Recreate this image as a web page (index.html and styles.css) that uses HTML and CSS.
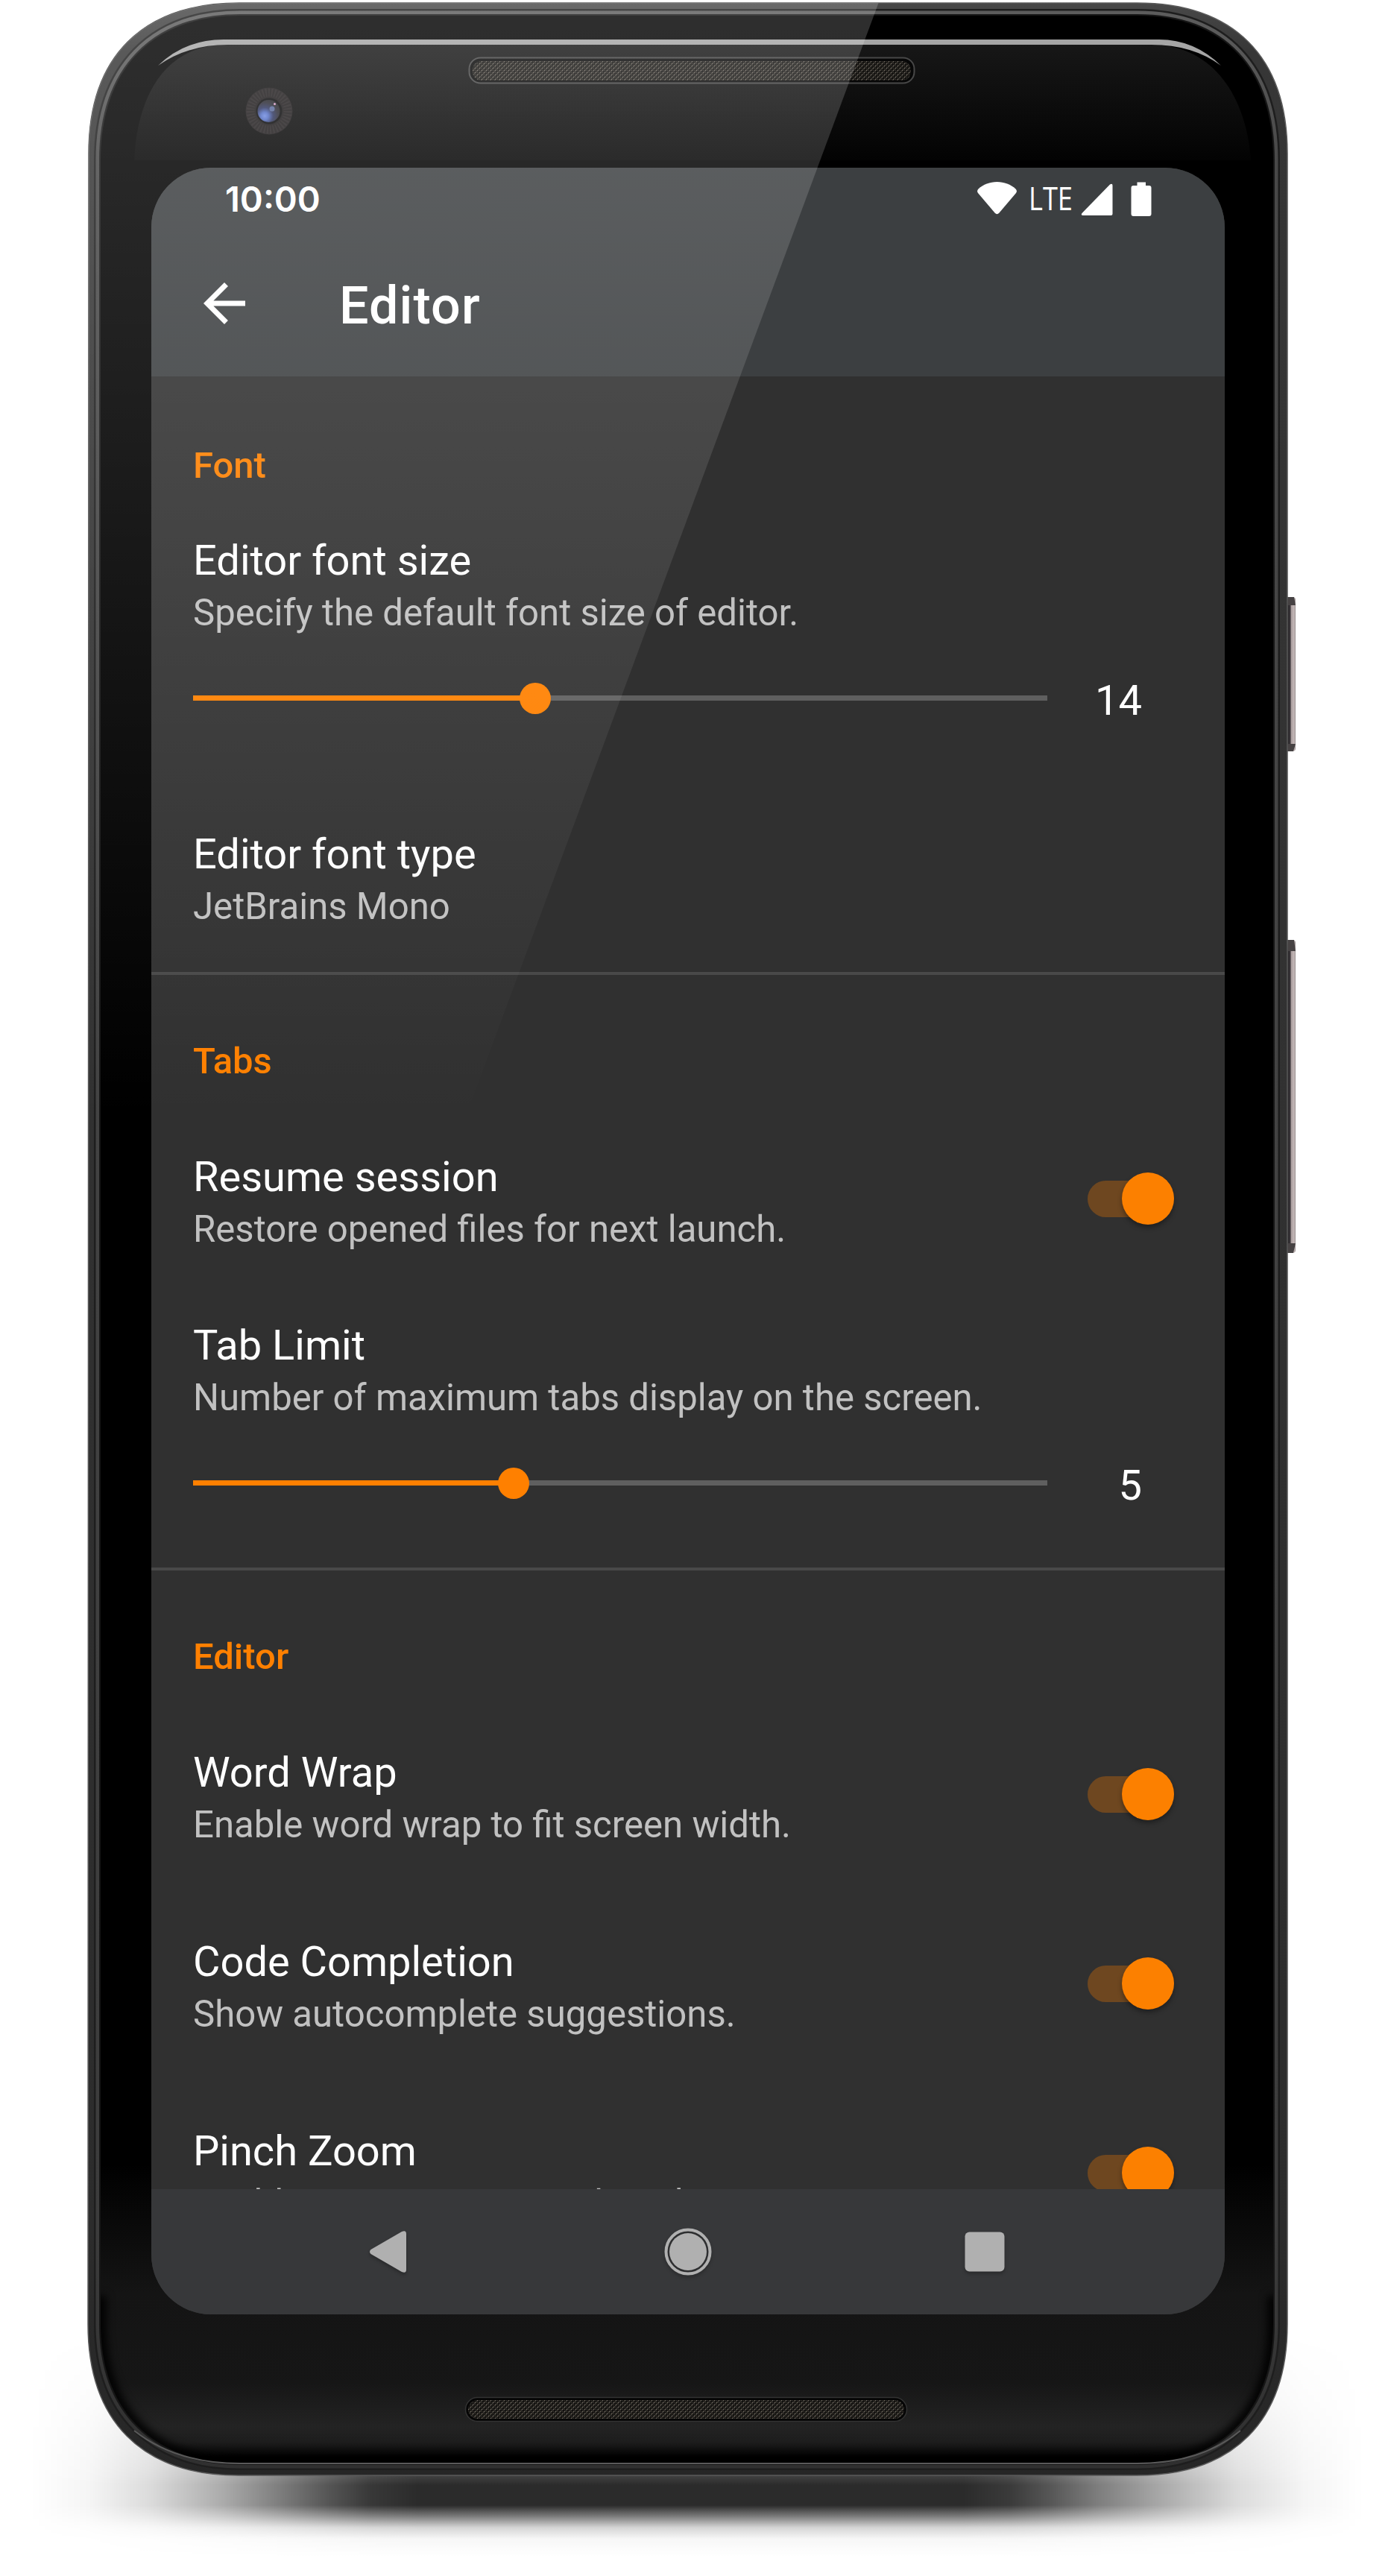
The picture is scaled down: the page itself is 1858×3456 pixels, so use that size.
FILE: index.html
```html
<!DOCTYPE html>
<html lang="en">
<head>
<meta charset="utf-8">
<title>Editor settings</title>
<link rel="stylesheet" href="styles.css">
</head>
<body>
<main class="device">
  <svg class="device-art" viewBox="0 0 1858 3456" aria-hidden="true">
    <defs>
      <path id="outline" d="M119 206C119 76 191 4 321 4H1525C1655 4 1727 76 1727 206V3118C1727 3248 1655 3321 1525 3321H320C190 3321 118 3248 118 3118Z"/>
      <path id="glass" d="M135 215C135 92 205 21 322 21H1525C1642 21 1708 92 1708 215V3118C1708 3235 1640 3305 1525 3305H322C206 3305 135 3235 135 3118Z"/>
      <clipPath id="glass-clip"><use href="#glass"/></clipPath>
      <linearGradient id="frame-fill" x1="0" y1="0" x2="0" y2="1">
        <stop offset="0" stop-color="#484848"/><stop offset=".02" stop-color="#363636"/><stop offset=".9" stop-color="#2c2c2c"/><stop offset="1" stop-color="#262626"/>
      </linearGradient>
      <linearGradient id="rim-fill" x1="0" y1="0" x2="0" y2="1">
        <stop offset="0" stop-color="#5c5c5c"/><stop offset=".06" stop-color="#484848"/><stop offset=".9" stop-color="#3c3c3c"/><stop offset="1" stop-color="#303030"/>
      </linearGradient>
      <linearGradient id="glass-fill" x1="0" y1="0" x2="0" y2="3456" gradientUnits="userSpaceOnUse">
        <stop offset="0" stop-color="#000"/><stop offset=".84" stop-color="#000"/><stop offset=".89" stop-color="#141414"/><stop offset=".925" stop-color="#161616"/><stop offset=".942" stop-color="#232323"/><stop offset=".948" stop-color="#1d1d1d"/><stop offset=".954" stop-color="#000"/>
      </linearGradient>
      <linearGradient id="top-fill" x1="0" y1="60" x2="0" y2="215" gradientUnits="userSpaceOnUse">
        <stop offset="0" stop-color="#171717"/><stop offset=".5" stop-color="#0d0d0d"/><stop offset="1" stop-color="#030303"/>
      </linearGradient>
      <linearGradient id="shadow-x" x1="40" y1="0" x2="1830" y2="0" gradientUnits="userSpaceOnUse">
        <stop offset="0" stop-color="#000" stop-opacity="0"/><stop offset=".045" stop-color="#000" stop-opacity=".04"/><stop offset=".09" stop-color="#000" stop-opacity=".14"/><stop offset=".145" stop-color="#000" stop-opacity=".33"/><stop offset=".19" stop-color="#000" stop-opacity=".52"/><stop offset=".225" stop-color="#000" stop-opacity=".67"/><stop offset=".255" stop-color="#000" stop-opacity=".78"/><stop offset=".29" stop-color="#000" stop-opacity=".83"/>
        <stop offset=".7" stop-color="#000" stop-opacity=".83"/><stop offset=".735" stop-color="#000" stop-opacity=".77"/><stop offset=".765" stop-color="#000" stop-opacity=".66"/><stop offset=".8" stop-color="#000" stop-opacity=".51"/><stop offset=".85" stop-color="#000" stop-opacity=".33"/><stop offset=".905" stop-color="#000" stop-opacity=".14"/><stop offset=".955" stop-color="#000" stop-opacity=".04"/><stop offset="1" stop-color="#000" stop-opacity="0"/>
      </linearGradient>
      <linearGradient id="shadow-y" x1="0" y1="3130" x2="0" y2="3430" gradientUnits="userSpaceOnUse">
        <stop offset="0" stop-color="#fff" stop-opacity="0"/><stop offset=".3" stop-color="#fff" stop-opacity=".3"/><stop offset=".6" stop-color="#fff" stop-opacity=".8"/><stop offset=".68" stop-color="#fff"/><stop offset=".77" stop-color="#fff"/><stop offset=".82" stop-color="#fff" stop-opacity=".62"/><stop offset=".87" stop-color="#fff" stop-opacity=".2"/><stop offset=".92" stop-color="#fff" stop-opacity=".04"/><stop offset="1" stop-color="#fff" stop-opacity="0"/>
      </linearGradient>
      <mask id="shadow-mask" maskUnits="userSpaceOnUse" x="0" y="3130" width="1858" height="300"><rect x="0" y="3130" width="1858" height="300" fill="url(#shadow-y)"/></mask>
      <linearGradient id="button-fill" x1="1726" y1="0" x2="1738" y2="0" gradientUnits="userSpaceOnUse">
        <stop offset="0" stop-color="#222"/><stop offset=".42" stop-color="#3a353a"/><stop offset=".5" stop-color="#a89c9c"/><stop offset=".85" stop-color="#c6baba"/><stop offset="1" stop-color="#8c8484"/>
      </linearGradient>
      <pattern id="mesh" width="6" height="6" patternUnits="userSpaceOnUse">
        <rect width="6" height="6" fill="#11100e"/>
        <path d="M.5 2.500L2.500 .5M3.500 5.500L5.500 3.500" stroke="#6b655c" stroke-width="1.200"/>
        <path d="M3.500 .5L5 2M.5 3.500L2 5" stroke="#37332e" stroke-width="1.100"/>
      </pattern>
      <radialGradient id="lens" cx=".32" cy=".72" r=".75">
        <stop offset="0" stop-color="#6f8be0"/><stop offset=".22" stop-color="#5570c4"/><stop offset=".5" stop-color="#303862"/><stop offset=".8" stop-color="#2c2c36"/><stop offset="1" stop-color="#26262a"/>
      </radialGradient>
      <filter id="soft" color-interpolation-filters="sRGB"><feGaussianBlur stdDeviation="6"/></filter>
    </defs>

    <!-- drop shadow under the phone -->
    <rect x="40" y="3130" width="1790" height="300" fill="url(#shadow-x)" mask="url(#shadow-mask)"/>

    <!-- side keys -->
    <rect x="1722" y="801" width="16" height="207" rx="4" fill="url(#button-fill)"/>
    <path d="M1727 801H1736L1738 812H1728Z M1727 1008H1735L1738 998H1728Z" fill="#464243"/>
    <rect x="1722" y="1261" width="16" height="420" rx="4" fill="url(#button-fill)"/>
    <path d="M1727 1261H1736L1738 1276H1728Z M1727 1681H1735L1738 1668H1728Z" fill="#464243"/>

    <!-- metal frame -->
    <use href="#outline" fill="url(#frame-fill)"/>
    <use href="#outline" fill="none" stroke="#5a5a5a" stroke-width="1.500"/>
    <use href="#glass" fill="none" stroke="#1e1e1e" stroke-width="18"/>
    <use href="#glass" fill="none" stroke="url(#rim-fill)" stroke-width="13"/>
    <use href="#glass" fill="none" stroke="#161616" stroke-width="4"/>

    <!-- front glass -->
    <use href="#glass" fill="url(#glass-fill)"/>
    <g clip-path="url(#glass-clip)">
      <path d="M180 215C184 130 220 62 300 60H1548C1628 62 1672 130 1678 215Z" fill="url(#top-fill)"/>
      <path d="M135 3080V3118C135 3235 206 3305 322 3305H1525C1640 3305 1708 3235 1708 3118V3080" fill="none" stroke="#000" stroke-width="14" filter="url(#soft)"/>
    </g>
    <path d="M180 3261Q236 3305 322 3305H1525Q1612 3305 1664 3261" fill="none" stroke="#5a5a5a" stroke-width="2"/>
    <path d="M212 88Q248 53 300 53H1555Q1602 53 1638 88Q1600 60 1545 60H305Q252 60 212 88Z" fill="#a5a5a5"/>

    <!-- earpiece and bottom speaker -->
    <rect x="629.500" y="77.500" width="597" height="34" rx="15" fill="#070707" stroke="#484848" stroke-width="2"/>
    <rect x="634" y="82" width="588" height="26" rx="12" fill="url(#mesh)"/>
    <rect x="624.500" y="3216.500" width="592" height="32" rx="16" fill="#050505" stroke="#333" stroke-width="1.500"/>
    <rect x="628" y="3220" width="585" height="25" rx="12.500" fill="url(#mesh)"/>

    <!-- front camera -->
    <circle cx="361" cy="149" r="31.500" fill="#1e1b1c"/>
    <circle cx="361" cy="149" r="25" fill="none" stroke="#282425" stroke-width="11" stroke-dasharray="2 2"/>
    <circle cx="361" cy="149" r="17.500" fill="#0a0a0b"/>
    <circle cx="360.500" cy="149" r="15" fill="url(#lens)"/>
    <circle cx="365" cy="146" r="3.500" fill="#5a6a9a"/>
    <circle cx="368.500" cy="139.500" r="1.500" fill="#d9a0c8"/>
  </svg>

  <section class="screen">
    <header class="top">
      <div class="status-bar">
        <span class="clock">10:00</span>
        <svg class="status-icons" viewBox="0 0 240 50" aria-label="Wi-Fi, LTE, signal, battery">
          <g fill="#fff">
            <path d="M27.500 4C37 4 46 7.500 52.500 13.500Q55 16 53 19L30.500 45.500Q27.500 49 24.500 45.500L2 19Q0 16 2.500 13.500C9 7.500 18 4 27.500 4Z"/>
            <text class="lte" x="70" y="42" textLength="59" lengthAdjust="spacingAndGlyphs">LTE</text>
            <path d="M143 49Q139.500 49 141.500 46L179 7.500Q182.500 5.500 182.500 9V47Q182.500 49 180.500 49Z"/>
            <path d="M215.500 4.500H227V9H231.500Q234.500 9 234.500 12V47Q234.500 50 231.500 50H210.500Q207.500 50 207.500 47V12Q207.500 9 210.500 9H215.500Z"/>
          </g>
        </svg>
      </div>
      <div class="app-bar">
        <svg class="back" viewBox="0 0 24 24" fill="#fff" aria-label="Back"><path d="M20 11H7.830l5.590-5.590L12 4l-8 8 8 8 1.410-1.410L7.830 13H20v-2z"/></svg>
        <h1 class="app-title">Editor</h1>
      </div>
    </header>

    <div class="settings">
      <section class="group">
        <h2 class="group-title">Font</h2>
        <div class="pref pref-first">
          <h3 class="pref-title">Editor font size</h3>
          <p class="pref-summary">Specify the default font size of editor.</p>
          <div class="slider-row">
            <div class="slider"><div class="slider-fill" style="width:40.030%"></div></div>
            <span class="slider-value">14</span>
          </div>
        </div>
        <div class="pref pref-last">
          <h3 class="pref-title">Editor font type</h3>
          <p class="pref-summary">JetBrains Mono</p>
        </div>
      </section>

      <section class="group">
        <h2 class="group-title">Tabs</h2>
        <div class="pref pref-toggle pref-tight">
          <div>
            <h3 class="pref-title">Resume session</h3>
            <p class="pref-summary">Restore opened files for next launch.</p>
          </div>
          <span class="switch"><span class="thumb"></span></span>
        </div>
        <div class="pref">
          <h3 class="pref-title">Tab Limit</h3>
          <p class="pref-summary">Number of maximum tabs display on the screen.</p>
          <div class="slider-row">
            <div class="slider"><div class="slider-fill" style="width:37.500%"></div></div>
            <span class="slider-value">5</span>
          </div>
        </div>
      </section>

      <section class="group">
        <h2 class="group-title">Editor</h2>
        <div class="pref pref-toggle">
          <div>
            <h3 class="pref-title">Word Wrap</h3>
            <p class="pref-summary">Enable word wrap to fit screen width.</p>
          </div>
          <span class="switch"><span class="thumb"></span></span>
        </div>
        <div class="pref pref-toggle">
          <div>
            <h3 class="pref-title">Code Completion</h3>
            <p class="pref-summary">Show autocomplete suggestions.</p>
          </div>
          <span class="switch"><span class="thumb"></span></span>
        </div>
        <div class="pref pref-toggle">
          <div>
            <h3 class="pref-title">Pinch Zoom</h3>
            <p class="pref-summary">Enable zoom gesture in the editor.</p>
          </div>
          <span class="switch"><span class="thumb"></span></span>
        </div>
      </section>
    </div>

    <nav class="nav-bar">
      <svg class="nav-icons" viewBox="0 0 1440 168" fill="#b0b0b0" aria-label="Back, home, recents">
        <path d="M294.500 81L336 57Q342 54.500 342 60V108Q342 113.500 336 111L294.500 87Q291.500 84 294.500 81Z"/>
        <circle cx="720" cy="84" r="25"/>
        <circle cx="720" cy="84" r="29.500" fill="none" stroke="#b0b0b0" stroke-width="4"/>
        <rect x="1091.500" y="57.500" width="53" height="53" rx="6"/>
      </svg>
    </nav>
  </section>

  <!-- diagonal reflection across the glass -->
  <svg class="device-glare" viewBox="0 0 1858 3456" aria-hidden="true">
    <defs>
      <linearGradient id="glare" x1="0" y1="0" x2="0" y2="1500" gradientUnits="userSpaceOnUse">
        <stop offset="0" stop-color="#fff" stop-opacity=".185"/><stop offset="1" stop-color="#fff" stop-opacity="0"/>
      </linearGradient>
      <clipPath id="body-clip"><use href="#outline"/></clipPath>
    </defs>
    <path d="M100 0H1180L624 1500H100Z" fill="url(#glare)" clip-path="url(#body-clip)"/>
  </svg>
</main>
</body>
</html>
```
FILE: styles.css
```css
* {
  box-sizing: border-box;
  margin: 0;
  padding: 0;
}

body {
  background: #fff;
  font-family: Roboto, "Liberation Sans", sans-serif;
  color: #fff;
}

.device {
  position: relative;
  width: 1858px;
  height: 3456px;
  padding: 225px 215px 351px 203px;
  overflow: hidden;
}

.device-art,
.device-glare {
  position: absolute;
  inset: 0;
  width: 1858px;
  height: 3456px;
}

.device-glare {
  pointer-events: none;
}

.screen {
  position: relative;
  display: flex;
  flex-direction: column;
  width: 1440px;
  height: 2880px;
  border-radius: 80px;
  overflow: hidden;
  background: #303030;
}

.top {
  flex: none;
  height: 280px;
  background: #3c3f41;
}

.status-bar {
  display: flex;
  justify-content: space-between;
  height: 84px;
  padding: 15px 93px 0 99px;
}

.clock {
  font: 600 47px/54px Inter, sans-serif;
}

.status-icons {
  width: 240px;
  height: 50px;
  overflow: visible;
}

.lte {
  font: 400 43px "Open Sans", sans-serif;
}

.app-bar {
  display: flex;
  align-items: center;
  gap: 112px;
  height: 196px;
  padding-left: 56px;
}

.back {
  width: 84px;
  height: 84px;
}

.app-title {
  font-size: 70px;
  line-height: 82px;
  font-weight: 500;
  letter-spacing: 1.1px;
  padding-top: 5px;
}

.settings {
  flex: 1;
  min-height: 0;
  overflow: hidden;
}

.group + .group {
  border-top: 4px solid #494949;
}

.group-title {
  padding: 91px 0 0 56px;
  font-size: 49px;
  line-height: 57px;
  font-weight: 500;
  color: #ff8000;
}

.group + .group .group-title {
  padding-top: 87px;
}

.pref {
  padding: 94px 68px 28px 56px;
}

.pref-first {
  padding: 66px 68px 0 56px;
}

.pref-last {
  padding: 91px 68px 59px 56px;
}

.pref-tight {
  padding-bottom: 0;
}

.pref-title {
  font-size: 56px;
  line-height: 66px;
  font-weight: 400;
}

.pref-summary {
  margin-top: 9px;
  font-size: 49.12px;
  line-height: 57px;
  color: #c1c1c1;
}

.pref-toggle {
  display: flex;
  justify-content: space-between;
  align-items: center;
}

.slider-row {
  display: flex;
  justify-content: space-between;
  align-items: center;
  height: 171px;
  padding-right: 43px;
}

.slider {
  width: 1146px;
  height: 7px;
  background: #5f5f5f;
}

.slider-fill {
  position: relative;
  height: 7px;
  background: #ff8000;
}

.slider-fill::after {
  content: "";
  position: absolute;
  right: -21px;
  top: -17px;
  width: 42px;
  height: 42px;
  border-radius: 50%;
  background: #ff8000;
}

.slider-value {
  padding-top: 6px;
  font-size: 56px;
  line-height: 66px;
}

.switch {
  display: flex;
  align-items: center;
  justify-content: flex-end;
  width: 116px;
  height: 49px;
  margin-bottom: 8px;
  border-radius: 25px;
  background: #6e4720;
}

.thumb {
  flex: none;
  width: 70px;
  height: 70px;
  border-radius: 50%;
  background: #fc8000;
  box-shadow: 0 4px 6px rgba(0, 0, 0, 0.35);
}

.nav-bar {
  flex: none;
  height: 168px;
  background: #37383a;
}

.nav-icons {
  display: block;
  width: 1440px;
  height: 168px;
  filter: drop-shadow(0 3px 2px rgba(0, 0, 0, 0.25));
}
```
